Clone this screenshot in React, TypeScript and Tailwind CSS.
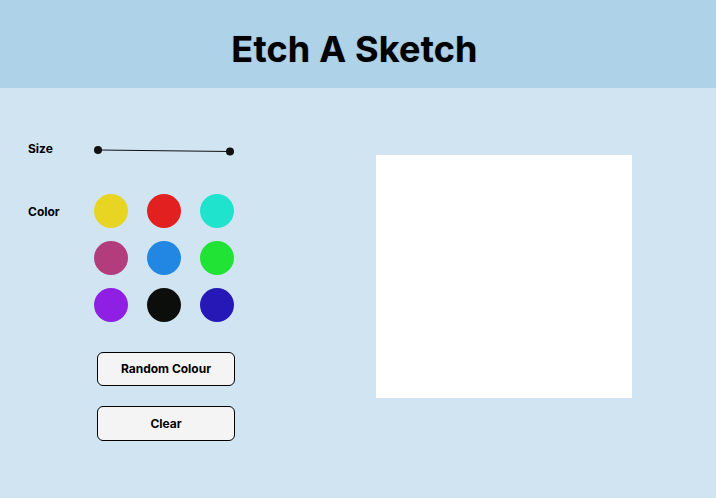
const colors = [
  "#e8d523",
  "#e22020",
  "#1fe3cc",
  "#b33d7c",
  "#2187e3",
  "#20e335",
  "#8f20e3",
  "#0c0e0c",
  "#2618b6",
];

function SizeSlider() {
  return (
    <svg width="140" height="10" viewBox="0 0 140 10" className="block">
      <line x1="4" y1="4" x2="136" y2="5.5" stroke="#111" strokeWidth="1.2" />
      <circle cx="4" cy="4" r="4" fill="#111" />
      <circle cx="136" cy="5.5" r="4" fill="#111" />
    </svg>
  );
}

export default function App() {
  return (
    <div
      className="min-h-[498px] bg-[#d0e4f1] text-black"
      style={{ fontFamily: "Inter, 'Liberation Sans', sans-serif" }}
    >
      <header className="flex h-[88px] items-center justify-center bg-[#aed2e8]">
        <h1 className="mr-[7px] mt-[10px] text-[36px] font-bold tracking-[0.2px] [text-shadow:0_0_1px_rgba(0,0,0,0.35)]">
          Etch A Sketch
        </h1>
      </header>

      <main className="flex">
        <section className="w-[260px] pl-[28px] pt-[52px]">
          <div className="flex h-[18px] items-center">
            <span className="w-[66px] text-[12px] font-bold">Size</span>
            <div className="mt-[3px]">
              <SizeSlider />
            </div>
          </div>

          <div className="mt-[36px] flex items-start">
            <span className="mt-[9px] w-[66px] text-[12px] font-bold">Color</span>
            <div className="grid grid-cols-[34px_34px_34px] gap-x-[19px] gap-y-[13px]">
              {colors.map((c) => (
                <button
                  key={c}
                  className="h-[34px] w-[34px] rounded-full"
                  style={{ backgroundColor: c }}
                />
              ))}
            </div>
          </div>

          <div className="ml-[69px] mt-[30px] flex flex-col gap-[20px]">
            <button className="h-[34px] w-[138px] rounded-[6px] border border-black bg-[#f4f4f4] text-[12px] font-bold">
              Random Colour
            </button>
            <button className="h-[35px] w-[138px] rounded-[6px] border border-black bg-[#f4f4f4] text-[12px] font-bold">
              Clear
            </button>
          </div>
        </section>

        <section className="ml-[116px] pt-[67px]">
          <div className="h-[243px] w-[256px] bg-white" />
        </section>
      </main>
    </div>
  );
}
